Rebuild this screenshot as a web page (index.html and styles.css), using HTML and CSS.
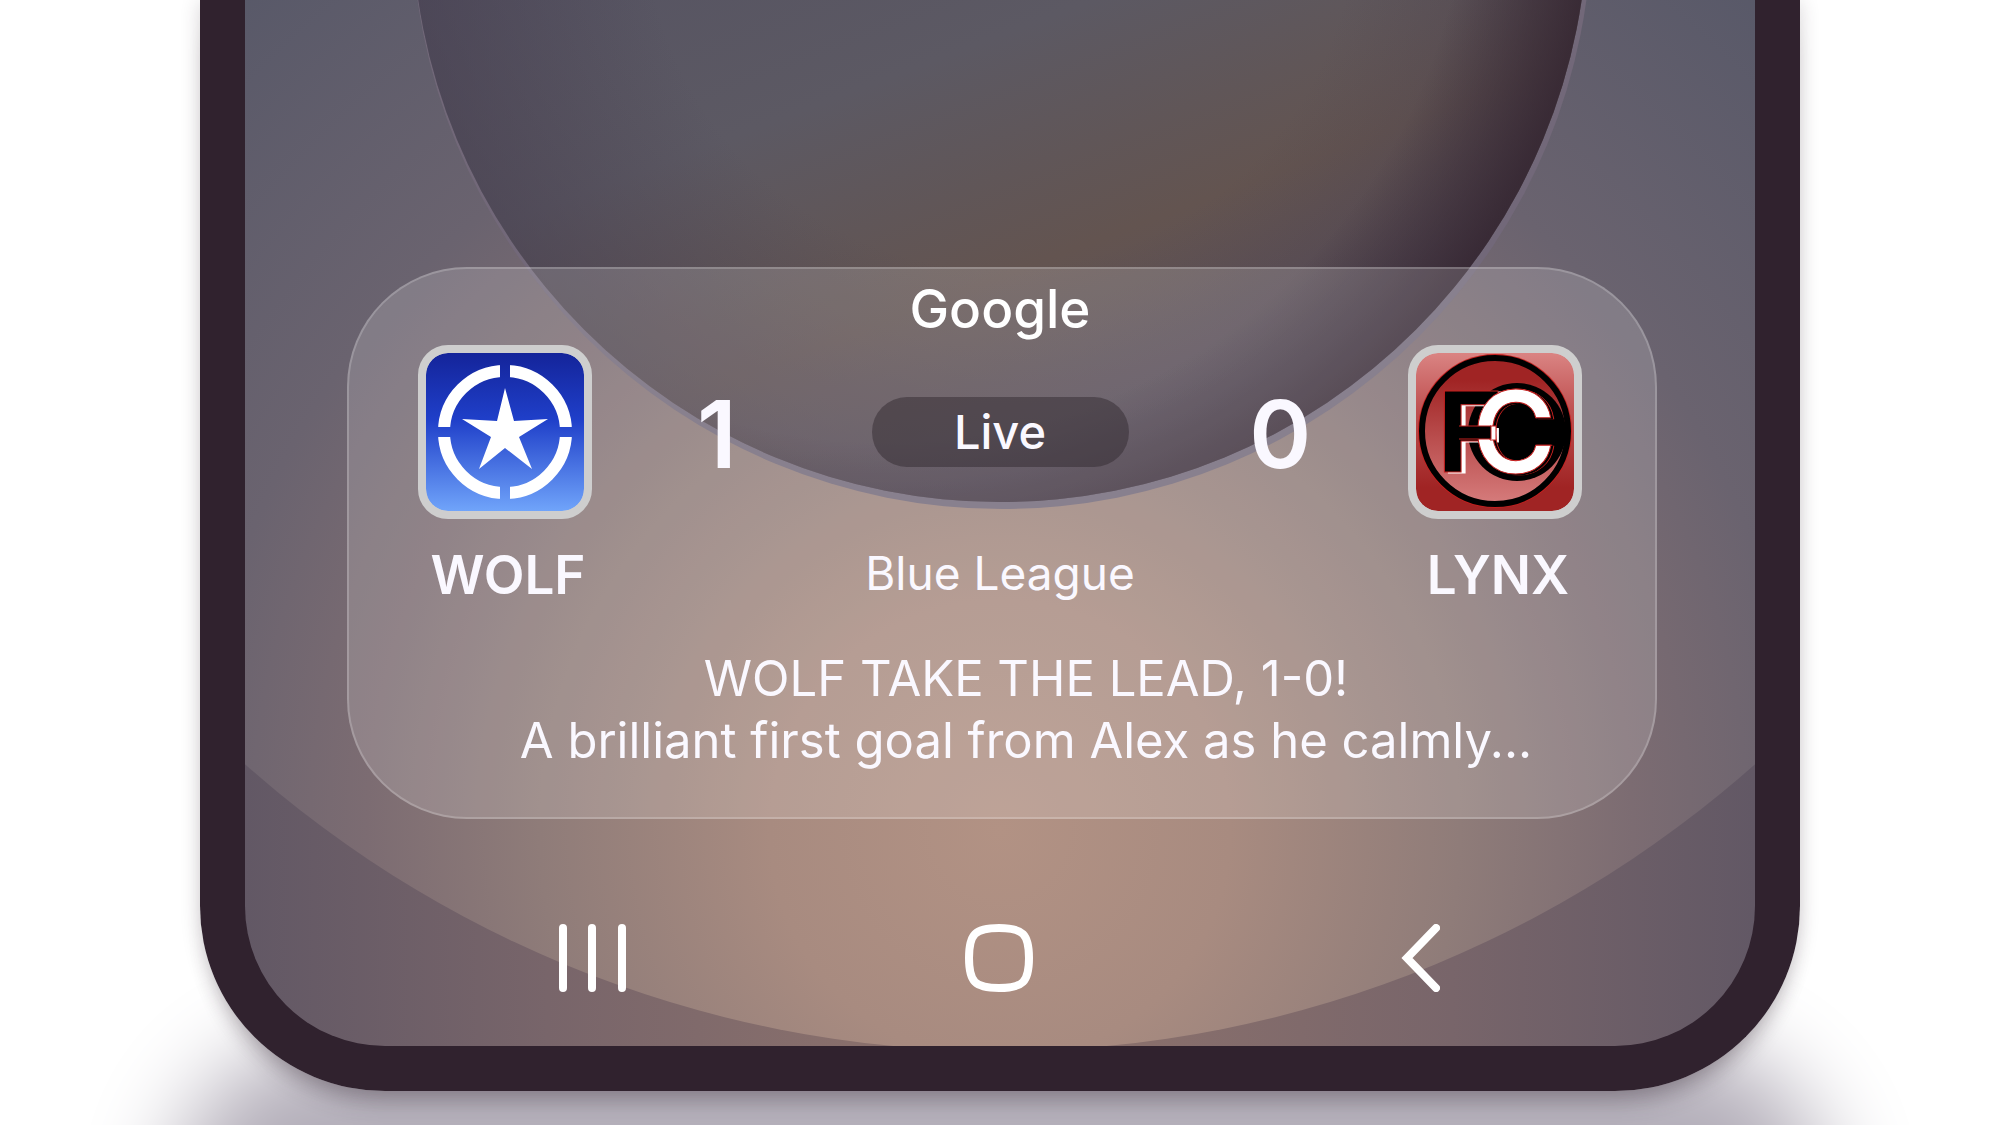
FILE: index.html
```
<!DOCTYPE html>
<html lang="en">
<head>
    <meta charset="utf-8">
    <meta name="viewport" content="width=device-width, initial-scale=1">
    <title>Live Score</title>
    <link rel="stylesheet" href="styles.css">
</head>
<body>
    <div class="phone">
        <div class="screen">
            <svg class="wallpaper" viewBox="0 0 1510 1046" preserveAspectRatio="xMidYMax slice" aria-hidden="true">
                <defs>
                    <radialGradient id="glow" gradientUnits="userSpaceOnUse" cx="755" cy="830" r="1150">
                        <stop offset="0" stop-color="#b29284"/>
                        <stop offset="0.2" stop-color="#a88b80"/>
                        <stop offset="0.4" stop-color="#8f7c79"/>
                        <stop offset="0.55" stop-color="#7c6c72"/>
                        <stop offset="0.7" stop-color="#6a636f"/>
                        <stop offset="1" stop-color="#575868"/>
                    </radialGradient>
                    <linearGradient id="floor" x1="0" y1="0" x2="1" y2="0">
                        <stop offset="0" stop-color="#625865"/>
                        <stop offset="0.2" stop-color="#78656a"/>
                        <stop offset="0.4" stop-color="#886f6c"/>
                        <stop offset="0.6" stop-color="#886f6c"/>
                        <stop offset="0.8" stop-color="#78656a"/>
                        <stop offset="1" stop-color="#625865"/>
                    </linearGradient>
                    <linearGradient id="disc" gradientUnits="userSpaceOnUse" x1="540" y1="-200" x2="790" y2="460">
                        <stop offset="0" stop-color="#545262"/>
                        <stop offset="0.42" stop-color="#5c5963"/>
                        <stop offset="0.74" stop-color="#635450"/>
                        <stop offset="1" stop-color="#5b505a"/>
                    </linearGradient>
                    <radialGradient id="edge" gradientUnits="userSpaceOnUse" cx="640" cy="-140" r="710">
                        <stop offset="0.82" stop-color="#33242f" stop-opacity="0"/>
                        <stop offset="1" stop-color="#33242f" stop-opacity="0.8"/>
                    </radialGradient>
                    <radialGradient id="base" gradientUnits="userSpaceOnUse" cx="755" cy="-86" r="589">
                        <stop offset="0.6" stop-color="#433a4c" stop-opacity="0"/>
                        <stop offset="1" stop-color="#433a4c" stop-opacity="0.5"/>
                    </radialGradient>
                </defs>
                <rect width="1510" height="1046" fill="url(#floor)"/>
                <circle cx="755" cy="-86" r="1137" fill="url(#glow)"/>
                <circle cx="757" cy="-81" r="590" fill="#726879"/>
                <circle cx="755" cy="-86" r="588" fill="url(#disc)"/>
                <circle cx="755" cy="-86" r="588" fill="url(#base)"/>
                <circle cx="755" cy="-86" r="588" fill="url(#edge)"/>
            </svg>

            <main class="card">
                <div class="brand">Google</div>
                <div class="match">
                    <div class="badge">
                        <svg viewBox="0 0 158 158" role="img" aria-label="Wolf badge">
                            <defs>
                                <linearGradient id="sky" x1="0" y1="0" x2="0" y2="1">
                                    <stop offset="0" stop-color="#14249a"/>
                                    <stop offset="0.42" stop-color="#1f3fc9"/>
                                    <stop offset="1" stop-color="#70a4fa"/>
                                </linearGradient>
                                <mask id="cross">
                                    <rect width="158" height="158" fill="#fff"/>
                                    <path d="M74 0h10v158h-10zM0 74h158v10H0z" fill="#000"/>
                                </mask>
                            </defs>
                            <rect width="158" height="158" fill="url(#sky)"/>
                            <circle cx="79" cy="79" r="61" fill="none" stroke="#fff" stroke-width="12" mask="url(#cross)"/>
                            <path d="M79 35L88 68L122 66L93 84L106 116L79 95L53 116L65 84L36 66L71 68Z" fill="#fff"/>
                        </svg>
                    </div>
                    <div class="score home">1</div>
                    <div class="status">Live</div>
                    <div class="score away">0</div>
                    <div class="badge">
                        <svg viewBox="0 0 158 158" role="img" aria-label="Lynx badge">
                            <defs>
                                <linearGradient id="red" x1="0" y1="0" x2="0" y2="1">
                                    <stop offset="0" stop-color="#da8483"/>
                                    <stop offset="0.35" stop-color="#c05252"/>
                                    <stop offset="0.85" stop-color="#a02424"/>
                                </linearGradient>
                                <linearGradient id="ball" x1="0" y1="0" x2="0" y2="1">
                                    <stop offset="0.15" stop-color="#a02424"/>
                                    <stop offset="1" stop-color="#d67c7c"/>
                                </linearGradient>
                            </defs>
                            <rect width="158" height="158" fill="url(#red)"/>
                            <circle cx="79" cy="78" r="77" fill="#c4201f"/>
                            <circle cx="79" cy="78" r="73" fill="url(#ball)" stroke="#000" stroke-width="6"/>
                            <circle cx="101" cy="79" r="49"/>
                            <text class="letter f" x="21" y="119">F</text>
                            <text class="letter c" x="56" y="120">C</text>
                            <path d="M74 73h6v14h-6z" fill="#fff" stroke="#c4201f"/>
                            <path d="M43 73h32v13H43" fill="#000" stroke="#c4201f"/>
                        </svg>
                    </div>
                    <div class="team">WOLF</div>
                    <div class="league">Blue League</div>
                    <div class="team">LYNX</div>
                </div>
                <p class="news">WOLF TAKE THE LEAD, 1-0!<br>A brilliant first goal from Alex as he calmly...</p>
            </main>

            <nav class="navbar">
                <button type="button" aria-label="Recent apps">
                    <svg viewBox="0 0 68 68"><path d="M5 4v60M34 4v60M64 4v60"/></svg>
                </button>
                <button type="button" aria-label="Home">
                    <svg viewBox="0 0 68 68"><path d="M34 4C58 4 64 10 64 34S58 64 34 64S4 58 4 34S10 4 34 4Z"/></svg>
                </button>
                <button type="button" aria-label="Back">
                    <svg viewBox="0 0 68 68"><path d="M64 4L35 34L64 64"/></svg>
                </button>
            </nav>
        </div>
    </div>
</body>
</html>
```
FILE: styles.css
```
* {
    box-sizing: border-box;
}
body {
    margin: 0;
    min-height: 100vh;
    overflow: hidden;
    background-color: #fff;
    color: #faf8ff;
    font-family: Inter, "Liberation Sans", sans-serif;
}
.phone {
    position: relative;
    width: 80%;
    margin: 0 auto;
    border-radius: 0 0 185px 185px;
    box-shadow: 0 2px 20px rgba(48, 34, 46, 0.2), 0 24px 24px -14px rgba(48, 34, 46, 0.3);
}
/* floor shadow under the phone */
.phone::before {
    content: "";
    position: absolute;
    z-index: -1;
    left: 150px;
    right: 150px;
    bottom: 60px;
    height: 100px;
    border-radius: 50px;
    box-shadow: 0 290px 90px 180px #b4afba;
}
.screen {
    position: relative;
    overflow: hidden;
    padding: 267px 98px 54px 102px;
    border: 45px solid #30222e;
    border-top: 0;
    border-radius: 0 0 185px 185px;
    background-color: #30222e;
}
.wallpaper {
    position: absolute;
    top: 0;
    left: 0;
    width: 100%;
    height: 100%;
}
.card {
    position: relative;
    padding: 8px 73px 45px 69px;
    border: 2px solid rgba(255, 255, 255, 0.2);
    border-radius: 120px;
    background-color: rgba(255, 255, 255, 0.16);
}
.brand {
    padding-bottom: 4px;
    color: #fff;
    font-size: 53px;
    font-weight: 500;
    line-height: 64px;
    text-align: center;
}
.match {
    display: grid;
    grid-template-columns: 174px 1fr 257px 1fr 174px;
    row-gap: 24px;
    align-items: center;
    text-align: center;
}
.badge {
    height: 174px;
    overflow: hidden;
    border: 8px solid #cecece;
    border-radius: 30px;
    background-color: #cecece;
}
.badge svg {
    display: block;
    border-radius: 22px;
}
.letter {
    stroke: #c4201f;
    stroke-width: 1px;
    font-size: 112px;
    font-weight: 700;
}
.f {
    filter: drop-shadow(4px 1px 0 #fff);
}
.c {
    fill: #fff;
    font-size: 114px;
    font-weight: 600;
    filter: drop-shadow(2px 1px 0 #000) drop-shadow(1px 0 0 #c4201f);
}
.score {
    padding-top: 4px;
    font-size: 94px;
    font-weight: 600;
    line-height: 96px;
}
.home {
    padding-right: 30px;
}
.away {
    padding-left: 24px;
}
.status {
    border-radius: 35px;
    background-color: rgba(50, 42, 48, 0.5);
    font-size: 47px;
    font-weight: 500;
    line-height: 70px;
}
.team {
    padding-left: 6px;
    font-size: 53px;
    font-weight: 600;
    line-height: 64px;
}
.league {
    grid-column: 2 / 5;
    font-size: 46px;
    line-height: 60px;
    padding-bottom: 4px;
}
.news {
    margin: 41px 0 0;
    padding-left: 52px;
    font-size: 49px;
    line-height: 62px;
    text-align: center;
}
.navbar {
    position: relative;
    display: flex;
    justify-content: space-between;
    margin: 105px 217px 0 211px;
}
.navbar button {
    width: 68px;
    height: 68px;
    padding: 0;
    border: 0;
    background: none;
    cursor: pointer;
}
.navbar svg {
    display: block;
    fill: none;
    stroke: #fff;
    stroke-width: 8px;
    stroke-linecap: round;
}
```
